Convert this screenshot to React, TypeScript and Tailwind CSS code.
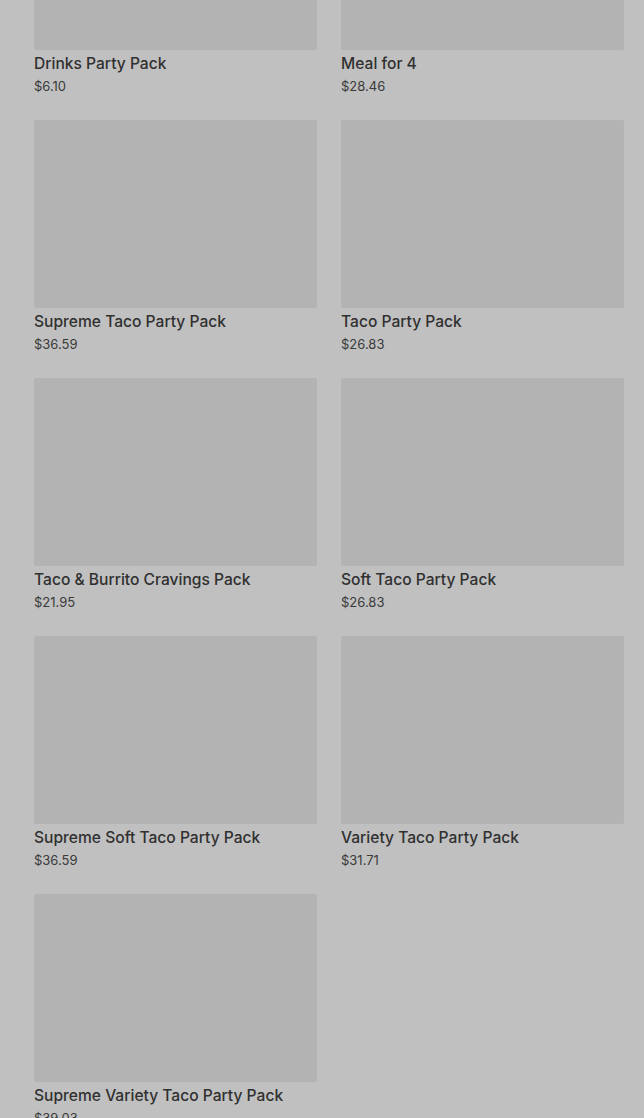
const ITEMS = [
  { name: "Drinks Party Pack", price: "$6.10" },
  { name: "Meal for 4", price: "$28.46" },
  { name: "Supreme Taco Party Pack", price: "$36.59" },
  { name: "Taco Party Pack", price: "$26.83" },
  { name: "Taco & Burrito Cravings Pack", price: "$21.95" },
  { name: "Soft Taco Party Pack", price: "$26.83" },
  { name: "Supreme Soft Taco Party Pack", price: "$36.59" },
  { name: "Variety Taco Party Pack", price: "$31.71" },
  { name: "Supreme Variety Taco Party Pack", price: "$39.03" },
];

export default function App() {
  return (
    <div className="h-[1118px] overflow-hidden bg-[#c0c0c0] font-['Inter',sans-serif]">
      <div className="-mt-[138px] grid grid-cols-2 gap-x-6 gap-y-6 pl-[34px] pr-[20px]">
        {ITEMS.map((item) => (
          <div key={item.name}>
            <div className="h-[188px] rounded-[2px] bg-[#b3b3b3]" />
            <div className="mt-[2px] text-[15.6px] leading-6 font-medium text-[#303030]">
              {item.name}
            </div>
            <div className="text-[13px] leading-5 text-[#3a3a3a]">{item.price}</div>
          </div>
        ))}
      </div>
    </div>
  );
}
